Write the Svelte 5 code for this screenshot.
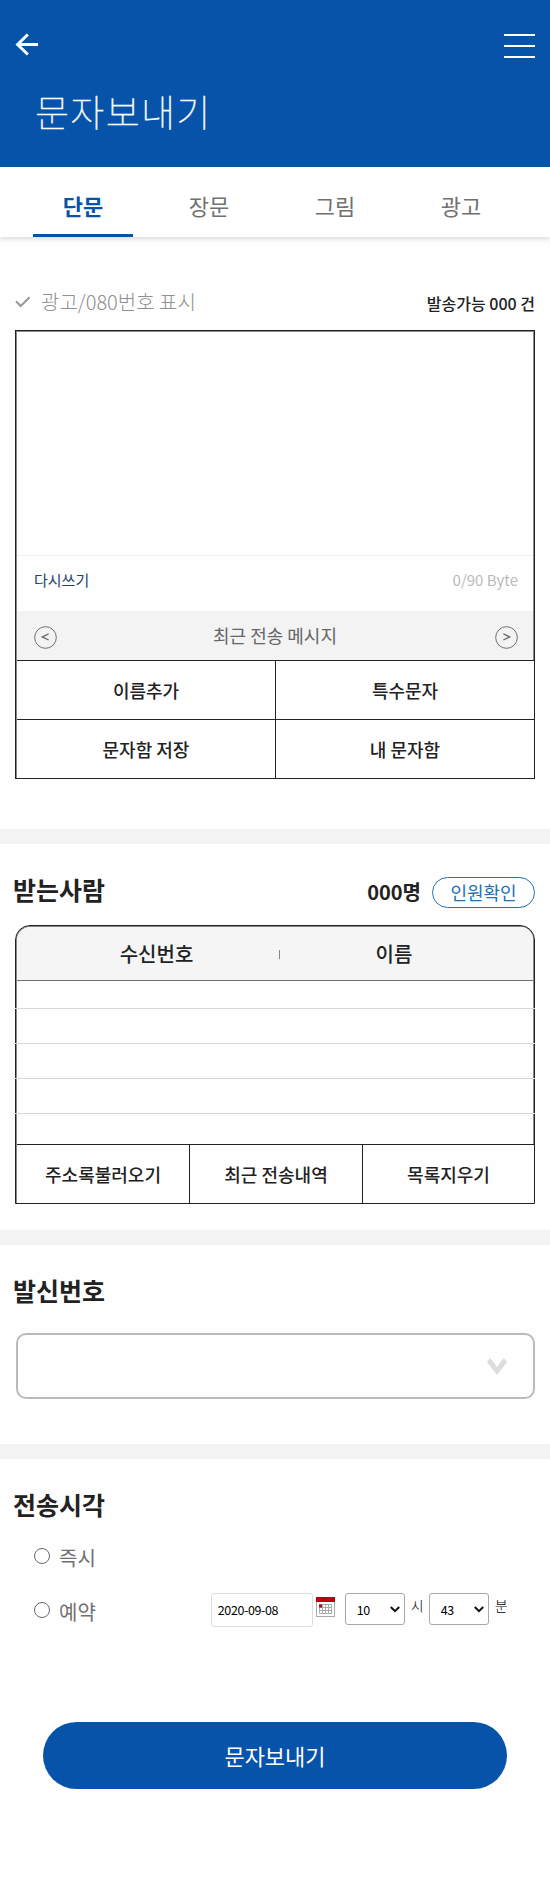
<script>
  const tabs = ['단문', '장문', '그림', '광고'];
  const tools = ['이름추가', '특수문자', '문자함 저장', '내 문자함'];
  const listActions = ['주소록불러오기', '최근 전송내역', '목록지우기'];
  let active = $state('단문');
  let when = $state('');
</script>

<div class="page">
  <header>
    <div class="bar">
      <button class="icon" aria-label="뒤로">
        <svg width="24" height="24" viewBox="0 0 24 24" fill="none" stroke="#fff" stroke-width="3">
          <path d="M12.8 1.5 2.6 11.5 12.8 21.5M2.6 11.5H23" />
        </svg>
      </button>
      <button class="icon menu" aria-label="메뉴"><i></i><i></i><i></i></button>
    </div>
    <h1>문자보내기</h1>
  </header>

  <nav>
    {#each tabs as tab}
      <button class:active={active === tab} onclick={() => (active = tab)}><span>{tab}</span></button>
    {/each}
  </nav>

  <section class="compose">
    <div class="info">
      <span class="ad">
        <svg width="16" height="12" viewBox="0 0 16 12" fill="none" stroke="#999" stroke-width="2"><path d="M1 5.2 5.7 10 14.6 1.2" /></svg>
        광고/080번호 표시
      </span>
      <span class="left-count">발송가능 000 건</span>
    </div>
    <div class="message">
      <div class="text"></div>
      <div class="meta"><span class="reset">다시쓰기</span><span class="bytes">0/90 Byte</span></div>
      <div class="recent">
        <svg width="23" height="23" viewBox="0 0 24 24" fill="none" stroke="#666"><circle cx="12" cy="12" r="11.3" /><path d="M15.3 8.2 8.6 11.4 15.3 14.6" stroke-width="1.3" /></svg>
        <span>최근 전송 메시지</span>
        <svg width="23" height="23" viewBox="0 0 24 24" fill="none" stroke="#666"><circle cx="12" cy="12" r="11.3" /><path d="M8.7 8.2 15.4 11.4 8.7 14.6" stroke-width="1.3" /></svg>
      </div>
      <div class="tools">
        {#each tools as tool}<button>{tool}</button>{/each}
      </div>
    </div>
  </section>

  <section class="recipients">
    <div class="heading">
      <h2>받는사람</h2>
      <b>000명</b>
      <button class="pill">인원확인</button>
    </div>
    <div class="list">
      <div class="cols"><span>수신번호</span><i></i><span>이름</span></div>
      <div class="rows">
        <div></div><div></div><div></div><div></div><div></div>
      </div>
      <div class="actions">
        {#each listActions as action}<button>{action}</button>{/each}
      </div>
    </div>
  </section>

  <section class="sender">
    <h2>발신번호</h2>
    <div class="number">
      <svg width="20" height="17" viewBox="0 0 20 17" fill="#dcdcdc"><path d="M0 4 3.3 0 10 9 16.7 0 20 4 10 17Z" /></svg>
    </div>
  </section>

  <section class="time">
    <h2>전송시각</h2>
    <div class="option now">
      <label><input type="radio" bind:group={when} value="now" />즉시</label>
    </div>
    <div class="option later">
      <label><input type="radio" bind:group={when} value="later" />예약</label>
      <div class="schedule">
        <span class="date">2020-09-08</span>
        <svg class="calendar" width="19" height="20" viewBox="0 0 19 20">
          <rect x=".5" y=".5" width="18" height="19" fill="#fff" stroke="#aaa" />
          <rect width="19" height="5" fill="#c00010" />
          <path d="M3.5 7.5h12v9h-12zM3.5 10.5h12M3.5 13.5h12M6.5 7.5v9M9.5 7.5v9M12.5 7.5v9" fill="none" stroke="#aaa" />
          <rect x="3" y="7.5" width="3" height="3" fill="#c00010" />
        </svg>
        <span class="drop">10<svg width="10" height="7" viewBox="0 0 10 7" fill="none" stroke="#111" stroke-width="2"><path d="M.8 1 5 5.2 9.2 1" /></svg></span>
        <span class="unit">시</span>
        <span class="drop">43<svg width="10" height="7" viewBox="0 0 10 7" fill="none" stroke="#111" stroke-width="2"><path d="M.8 1 5 5.2 9.2 1" /></svg></span>
        <span class="unit">분</span>
      </div>
    </div>
  </section>

  <button class="send">문자보내기</button>
</div>

<style>
  :global(body) { background: #fefefe; }
  .page {
    width: 550px;
    height: 1885px;
    background: #fefefe;
    color: #222;
    font-family: 'Noto Sans CJK KR', 'Noto Sans', sans-serif;
    overflow: hidden;
  }
  .page, .page * { box-sizing: border-box; }
  button { margin: 0; padding: 0; border: 0; background: none; color: inherit; font: inherit; }
  svg { display: block; flex: none; }
  h1, h2 { margin: 0; }

  header { height: 167px; background: #0753a9; color: #fff; }
  .bar { display: flex; justify-content: space-between; padding: 33px 15px 0; height: 86px; }
  .icon { height: 24px; }
  .menu { display: flex; flex-direction: column; gap: 9px; width: 31px; height: 26px; padding-top: 1px; }
  .menu i { flex: none; height: 2px; background: #fff; }
  h1 {
    padding-left: 35px;
    font-size: 37px;
    line-height: 50px;
    font-weight: 100;
    letter-spacing: 1.3px;
    -webkit-text-stroke: .4px #fff;
  }

  nav {
    display: grid;
    grid-template-columns: repeat(4, 126px);
    height: 70px;
    padding-left: 20px;
    background: #fff;
    box-shadow: 0 2px 5px rgba(0, 0, 0, .15);
  }
  nav button { display: flex; justify-content: center; font-size: 22px; line-height: 76px; color: #707070; }
  nav span { width: 100px; height: 70px; }
  nav .active { color: #0753a9; font-weight: 700; }
  nav .active span { border-bottom: 3px solid #0753a9; }

  .compose { height: 592px; padding: 47px 15px 0; }
  .info { display: flex; justify-content: space-between; height: 46px; line-height: 34px; }
  .ad { display: flex; align-items: center; gap: 10px; height: 34px; padding-top: 2px; font-size: 20px; font-weight: 300; color: #909090; }
  .ad svg { margin-top: -1px; }
  .left-count { font-size: 16px; font-weight: 500; line-height: 38px; }
  .message {
    height: 449px;
    border: 1px solid #222;
    box-shadow: inset 1px 1px #888, inset -1px 0 #888;
    padding: 1px 1px 0;
  }
  .text { height: 223px; }
  .meta {
    display: flex;
    justify-content: space-between;
    height: 56px;
    padding: 0 15px 0 17px;
    border-top: 1px solid #f0f0f0;
    font-size: 15px;
    line-height: 48px;
  }
  .reset { color: #24406b; }
  .bytes { color: #bbb; font-size: 15px; }
  .recent {
    display: flex;
    align-items: center;
    justify-content: space-between;
    height: 49px;
    padding: 3px 15px 0 17px;
    background: #f3f3f3;
    color: #666;
    font-size: 18px;
  }
  .recent span { line-height: 46px; margin: -4px 2px 0 0; }
  .tools {
    display: grid;
    grid-template-columns: 259px 1fr;
    grid-template-rows: 59px 59px;
    margin-right: -1px;
    background: #fefefe;
    font-size: 18px;
    font-weight: 500;
  }
  .tools button { border-top: 1px solid #222; line-height: 56px; padding-bottom: 1px; }
  .tools button:nth-child(odd) { border-right: 1px solid #222; }

  .recipients, .sender, .time { border-top: 15px solid #f3f3f3; }
  h2 { margin-top: -1px; font-size: 25px; line-height: 36px; font-weight: 700; }
  .recipients { height: 401px; padding: 28px 15px 0 13px; }
  .heading { display: flex; height: 53px; }
  .heading b { margin-left: auto; font-size: 20px; line-height: 40px; }
  .pill {
    width: 103px;
    height: 31px;
    margin: 5px 0 0 11px;
    border: 1px solid #2272b4;
    border-radius: 16px;
    color: #2272b4;
    font-size: 18px;
    line-height: 26px;
    padding-bottom: 2px;
  }
  .list {
    height: 279px;
    margin-left: 2px;
    border: 1px solid #222;
    border-radius: 15px 15px 0 0;
    box-shadow: inset 1px 1px #888, inset -1px 0 #888;
    padding: 1px 1px 0;
  }
  .cols {
    display: grid;
    grid-template-columns: 262px 1px 1fr;
    align-items: center;
    height: 54px;
    border-bottom: 1px solid #707070;
    border-radius: 13px 13px 0 0;
    background: #f5f5f5;
    font-size: 20px;
    font-weight: 500;
    line-height: 52px;
    text-align: center;
  }
  .cols span:first-child { padding-left: 17px; }
  .cols span:last-child { padding-right: 25px; }
  .cols i { height: 9px; background: #888; margin-top: 2px; }
  .rows { height: 163px; margin: 0 -2px; overflow: hidden; }
  .rows div { height: 35px; border-bottom: 1px solid #d8d8d8; }
  .rows div:first-child { height: 28px; }
  .rows div:last-child { border: 0; }
  .actions {
    display: grid;
    grid-template-columns: 172px 173px 1fr;
    height: 59px;
    margin-right: -1px;
    border-top: 1px solid #222;
    background: #fefefe;
    font-size: 18px;
    font-weight: 500;
  }
  .actions button + button { border-left: 1px solid #222; }
  .actions button { line-height: 58px; }

  .sender { height: 214px; padding: 28px 15px 0 13px; }
  .number {
    display: flex;
    align-items: center;
    justify-content: flex-end;
    height: 66px;
    margin: 25px 0 0 3px;
    padding-right: 26px;
    border: 2px solid #bbb;
    border-radius: 10px;
  }

  .time { height: 278px; padding: 28px 13px 0; }
  .option { display: flex; padding-left: 21px; }
  .now { height: 60px; padding-top: 18px; }
  .later { padding-top: 12px; }
  label { display: flex; align-items: center; gap: 9px; height: 34px; font-size: 20px; color: #707070; }
  input { appearance: none; width: 16px; height: 16px; margin: -2px 0 0; border: 1px solid #666; border-radius: 50%; background: #fff; }
  .schedule { display: flex; margin: -1px 0 0 115px; font-size: 12.5px; color: #000; }
  .date { width: 102px; height: 34px; border: 1px solid #dcdce4; border-radius: 3px; padding-left: 6px; line-height: 31px; letter-spacing: -.4px; background: #fff; }
  .calendar { margin: 4px 10px 0 3px; }
  .drop {
    display: flex;
    align-items: center;
    justify-content: space-between;
    width: 60px;
    height: 32px;
    padding: 0 4px 0 11px;
    border: 1px solid #a8a8a8;
    border-radius: 3px;
    background: #fff;
    letter-spacing: -.6px;
  }
  .unit { width: 24px; padding-left: 6px; font-size: 14px; font-weight: 300; line-height: 24px; }

  .send {
    display: block;
    width: 464px;
    height: 67px;
    margin: 0 auto;
    padding-bottom: 2px;
    border-radius: 34px;
    background: #0753a9;
    color: #fff;
    font-size: 22px;
    line-height: 64px;
  }
</style>
